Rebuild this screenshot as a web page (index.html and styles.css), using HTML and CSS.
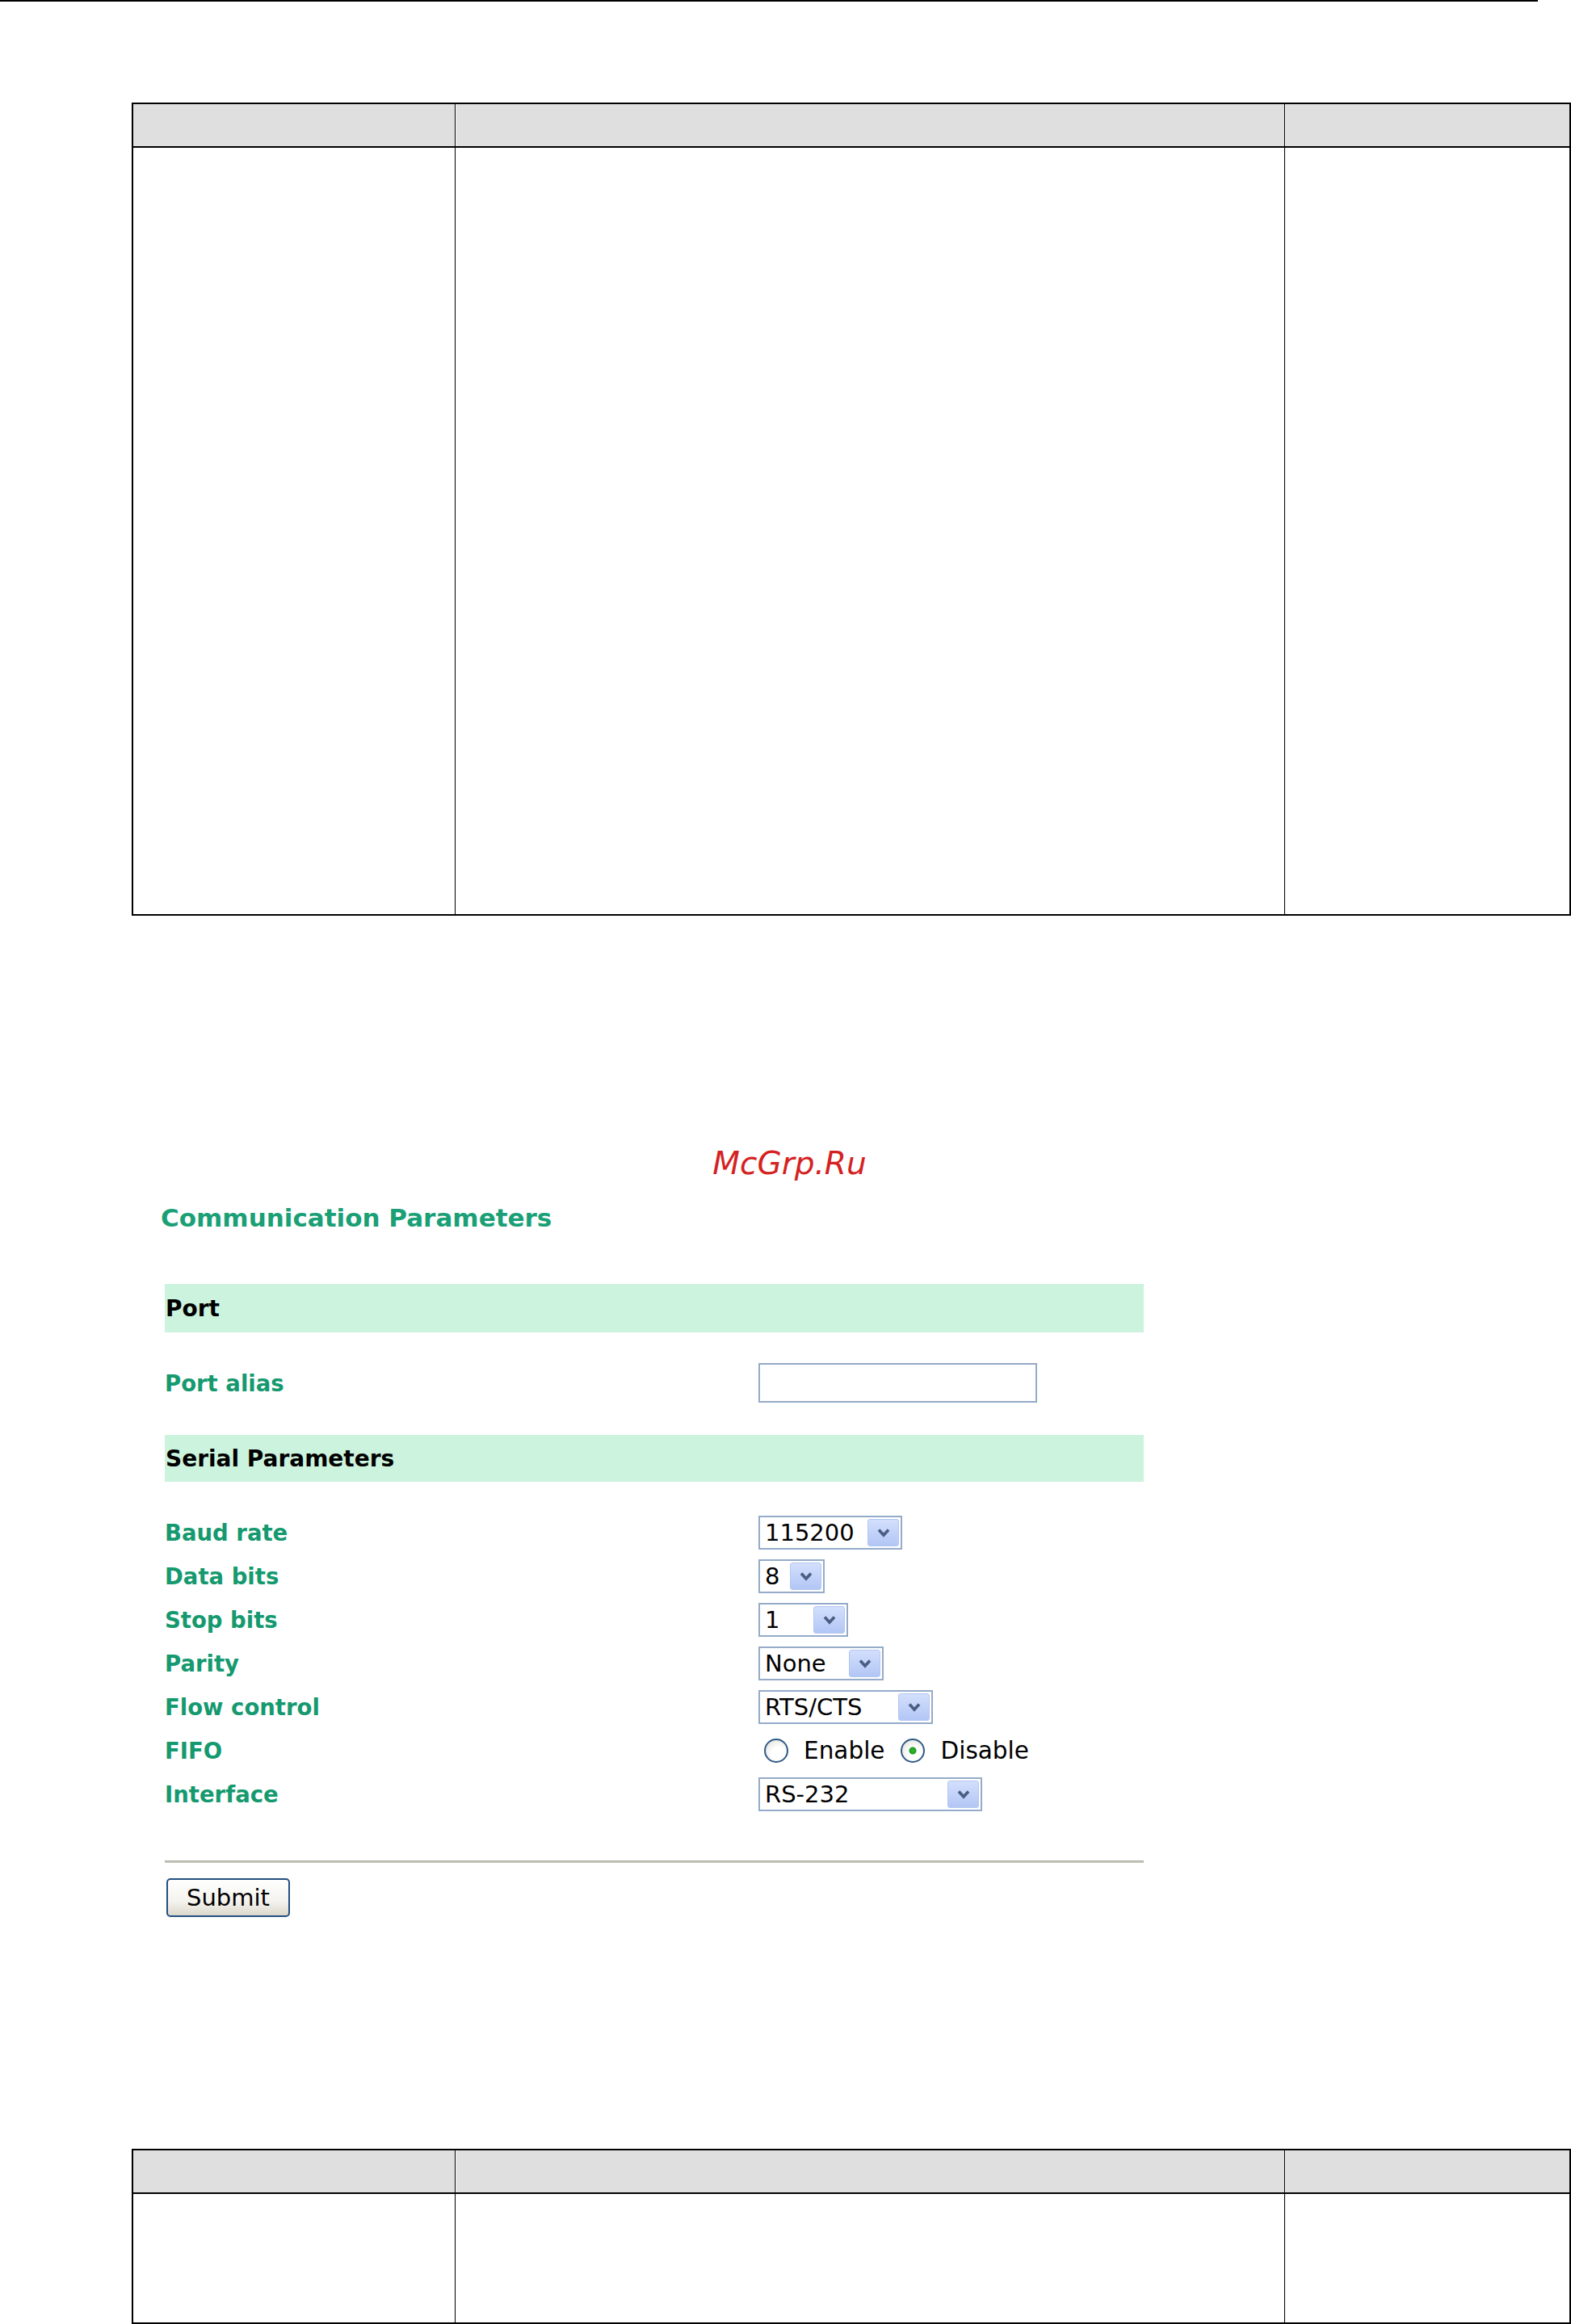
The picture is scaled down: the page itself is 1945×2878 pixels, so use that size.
FILE: index.html
```html
<!DOCTYPE html>
<html lang="en">
<head>
<meta charset="utf-8">
<title>Communication Parameters</title>
<link rel="stylesheet" href="styles.css">
</head>
<body>
<div class="topline"></div>

<div class="doc-table tall">
  <div class="th"></div><div class="th mid"></div><div class="th mid"></div>
  <div class="td"></div><div class="td"></div><div class="td"></div>
</div>

<div class="watermark">McGrp.Ru</div>

<h1 class="title">Communication Parameters</h1>

<form class="form">
  <div class="section">Port</div>
  <div class="row alias-row">
    <label class="label">Port alias</label>
    <input class="textbox" type="text">
  </div>

  <div class="section serial">Serial Parameters</div>
  <div class="rows">
    <div class="row">
      <label class="label">Baud rate</label>
      <div class="dropdown w-baud"><select><option>115200</option></select><span class="arrow"><svg viewBox="0 0 16 12" width="16" height="12"><path d="M2 2.5 L8 9 L14 2.5" fill="none" stroke="#4a5d82" stroke-width="3.6"/></svg></span></div>
    </div>
    <div class="row">
      <label class="label">Data bits</label>
      <div class="dropdown w-data"><select><option>8</option></select><span class="arrow"><svg viewBox="0 0 16 12" width="16" height="12"><path d="M2 2.5 L8 9 L14 2.5" fill="none" stroke="#4a5d82" stroke-width="3.6"/></svg></span></div>
    </div>
    <div class="row">
      <label class="label">Stop bits</label>
      <div class="dropdown w-stop"><select><option>1</option></select><span class="arrow"><svg viewBox="0 0 16 12" width="16" height="12"><path d="M2 2.5 L8 9 L14 2.5" fill="none" stroke="#4a5d82" stroke-width="3.6"/></svg></span></div>
    </div>
    <div class="row">
      <label class="label">Parity</label>
      <div class="dropdown w-parity"><select><option>None</option></select><span class="arrow"><svg viewBox="0 0 16 12" width="16" height="12"><path d="M2 2.5 L8 9 L14 2.5" fill="none" stroke="#4a5d82" stroke-width="3.6"/></svg></span></div>
    </div>
    <div class="row">
      <label class="label">Flow control</label>
      <div class="dropdown w-flow"><select><option>RTS/CTS</option></select><span class="arrow"><svg viewBox="0 0 16 12" width="16" height="12"><path d="M2 2.5 L8 9 L14 2.5" fill="none" stroke="#4a5d82" stroke-width="3.6"/></svg></span></div>
    </div>
    <div class="row">
      <label class="label">FIFO</label>
      <div class="radios">
        <input class="radio first" type="radio" name="fifo" id="fifo-en"><label class="radio-text" for="fifo-en">Enable</label>
        <input class="radio" type="radio" name="fifo" id="fifo-dis" checked><label class="radio-text" for="fifo-dis">Disable</label>
      </div>
    </div>
    <div class="row">
      <label class="label">Interface</label>
      <div class="dropdown w-iface"><select><option>RS-232</option></select><span class="arrow"><svg viewBox="0 0 16 12" width="16" height="12"><path d="M2 2.5 L8 9 L14 2.5" fill="none" stroke="#4a5d82" stroke-width="3.6"/></svg></span></div>
    </div>
  </div>

  <div class="rule"></div>
  <button class="submit" type="button">Submit</button>
</form>

<div class="doc-table short">
  <div class="th"></div><div class="th mid"></div><div class="th mid"></div>
  <div class="td"></div><div class="td"></div><div class="td"></div>
</div>
</body>
</html>
```

FILE: styles.css
```css
html, body {
  margin: 0;
  padding: 0;
  background: #fff;
}

body {
  font-family: "DejaVu Sans", Verdana, sans-serif;
  width: 1945px;
}

.topline {
  width: 1904px;
  height: 2px;
  background: #000;
}

/* Document tables */
.doc-table {
  margin-left: 163px;
  width: 1782px;
  box-sizing: border-box;
  border: 2px solid #000;
  background: #000;
  display: grid;
  grid-template-columns: 398px 1026px 352px;
  column-gap: 1px;
  row-gap: 2px;
}

.doc-table.tall {
  margin-top: 125px;
  grid-template-rows: 52px 949px;
}

.doc-table.short {
  margin-top: 287px;
  grid-template-rows: 52px 159px;
}

.th {
  background: #dfdfdf;
}

.th.mid {
  box-shadow: inset 1px 0 0 #fff;
}

.td {
  background: #fff;
}

/* Watermark */
.watermark {
  margin-top: 284px;
  padding-left: 10px;
  text-align: center;
  font-style: italic;
  font-size: 39px;
  line-height: 46px;
  color: #d42222;
}

/* Form */
.title {
  margin: 26px 0 0 199px;
  font-size: 31px;
  line-height: 36px;
  font-weight: bold;
  color: #1a9f76;
}

.form {
  margin: 0 0 0 204px;
  width: 1212px;
}

.section {
  margin-top: 64px;
  height: 60px;
  display: flex;
  align-items: center;
  padding-left: 1px;
  background: #ccf3dd;
  font-size: 28px;
  font-weight: bold;
  color: #000;
}

.section.serial {
  margin-top: 40px;
  height: 58px;
}

.row {
  display: flex;
  align-items: center;
  height: 54px;
}

.alias-row {
  margin-top: 38px;
  height: 49px;
}

.rows {
  margin-top: 36px;
}

.label {
  width: 735px;
  flex: none;
  font-size: 27.5px;
  font-weight: bold;
  color: #15996f;
}

.textbox {
  width: 345px;
  height: 49px;
  box-sizing: border-box;
  margin: 0;
  border: 2px solid #95aac6;
  background: #fff;
  padding: 0 6px;
  font: 29px "DejaVu Sans", sans-serif;
  outline: none;
}

.dropdown {
  display: flex;
  align-items: center;
  height: 42px;
  box-sizing: border-box;
  border: 2px solid #94abc9;
  background: #fff;
  padding: 2px;
}

.dropdown select {
  appearance: none;
  -webkit-appearance: none;
  flex: 1;
  min-width: 0;
  height: 100%;
  border: 0;
  margin: 0;
  padding: 0 0 0 4px;
  background: transparent;
  font: 29px "DejaVu Sans", sans-serif;
  color: #000;
  outline: none;
}

.arrow {
  flex: none;
  width: 39px;
  height: 34px;
  box-sizing: border-box;
  display: flex;
  align-items: center;
  justify-content: center;
  border: 1px solid #b4c7f1;
  border-radius: 3px;
  background: linear-gradient(#d3dffc, #b2c6f5);
}

.w-baud { width: 178px; }
.w-data { width: 82px; }
.w-stop { width: 111px; }
.w-parity { width: 155px; }
.w-flow { width: 216px; }
.w-iface { width: 277px; }

.radios {
  display: flex;
  align-items: center;
}

.radio {
  appearance: none;
  -webkit-appearance: none;
  width: 30px;
  height: 30px;
  box-sizing: border-box;
  margin: 0 19px 0 20px;
  border: 2px solid #2f5a86;
  border-radius: 50%;
  background: radial-gradient(circle at 60% 65%, #ffffff 35%, #dcdcd4 100%);
}

.radio.first {
  margin-left: 7px;
  margin-right: 19px;
}

.radio:checked {
  background:
    radial-gradient(circle, #33bb33 0, #1e9a1e 4px, transparent 5px),
    radial-gradient(circle at 60% 65%, #ffffff 35%, #dcdcd4 100%);
}

.radio-text {
  font-size: 29.5px;
  color: #000;
}

.rule {
  margin-top: 55px;
  height: 3px;
  box-sizing: border-box;
  border-top: 1px solid #a9a89f;
  background: #c9c8bf;
}

.submit {
  display: block;
  margin: 19px 0 0 2px;
  width: 153px;
  height: 48px;
  box-sizing: border-box;
  border: 2px solid #224f80;
  border-radius: 5px;
  background: linear-gradient(#ffffff 0%, #f4f3ee 60%, #dcd8cc 100%);
  font: 29px "DejaVu Sans", sans-serif;
  color: #000;
  padding: 0;
}
```
